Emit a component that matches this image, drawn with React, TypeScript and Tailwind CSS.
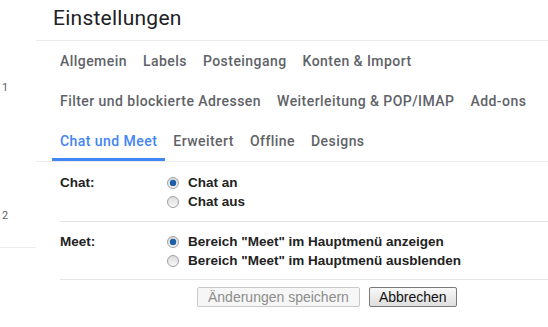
import { ReactNode } from 'react';

const tabCn = 'h-full flex items-center px-2 pt-[1px] text-[14px] tracking-[0.45px] font-medium text-[#5f6368]';
const labelCn = 'text-[13.5px] font-bold text-[#222222] leading-[19px]';

const Radio = ({ checked }: { checked?: boolean }) => {
  return (
    <span className="w-[12px] h-[12px] rounded-full border border-[#a0a0a0] bg-gradient-to-b from-[#dcdcdc] to-[#f7f7f7] flex items-center justify-center shrink-0">
      {checked && <span className="w-[6px] h-[6px] rounded-full bg-[#1a5fa8] shadow-[0_0_1px_#0b3e80]" />}
    </span>
  );
};

const Option = ({ checked, children }: { checked?: boolean; children: ReactNode }) => {
  return (
    <label className="flex items-center gap-[9px]">
      <Radio checked={checked} />
      <span className={labelCn}>{children}</span>
    </label>
  );
};

const App = () => {
  return (
    <div
      className="w-[548px] h-[327px] overflow-hidden bg-white flex"
      style={{ fontFamily: 'Roboto, "Liberation Sans", Arial, sans-serif' }}
    >
      <div className="w-[36px] shrink-0 flex flex-col text-[11px] text-[#5f6368]">
        <div className="pt-[80px] pl-[2px] leading-[16px]">1</div>
        <div className="pt-[112px] pl-[2px] leading-[16px]">2</div>
        <div className="h-[24px] border-b border-[#ececec]" />
      </div>

      <div className="flex-1 flex flex-col">
        <div className="h-[41px] border-b border-[#ebebeb] pl-[17px] pt-[5px]">
          <span className="text-[21px] tracking-[0.25px] leading-[26px] text-[#202124]">Einstellungen</span>
        </div>

        <div className="pl-[16px] flex h-[40px]">
          <div className={tabCn}>Allgemein</div>
          <div className={tabCn}>Labels</div>
          <div className={tabCn}>Posteingang</div>
          <div className={tabCn}>Konten &amp; Import</div>
        </div>
        <div className="pl-[16px] flex h-[40px]">
          <div className={tabCn}>Filter und blockierte Adressen</div>
          <div className={tabCn}>Weiterleitung &amp; POP/IMAP</div>
          <div className={tabCn}>Add-ons</div>
        </div>
        <div className="pl-[16px] flex h-[41px] border-b border-[#ebebeb]">
          <div className="h-full flex items-center px-2 text-[14px] tracking-[0.45px] font-medium text-[#4285f4] border-b-[3px] border-[#4285f4] pt-[3px]">
            Chat und Meet
          </div>
          <div className={tabCn}>Erweitert</div>
          <div className={tabCn}>Offline</div>
          <div className={tabCn}>Designs</div>
        </div>

        <div
          className="pl-[24px] flex flex-col"
          style={{ fontFamily: '"Liberation Sans", Arial, sans-serif' }}
        >
          <div className="flex pt-[11px] pb-[10px] border-b border-[#e5e5e5]">
            <div className={`${labelCn} w-[107px]`}>Chat:</div>
            <div className="flex flex-col">
              <Option checked>Chat an</Option>
              <Option>Chat aus</Option>
            </div>
          </div>
          <div className="flex pt-[10px] pb-[9px] border-b border-[#e5e5e5]">
            <div className={`${labelCn} w-[107px] leading-[18px]`}>Meet:</div>
            <div className="flex flex-col">
              <Option checked>Bereich "Meet" im Hauptmenü anzeigen</Option>
              <Option>Bereich "Meet" im Hauptmenü ausblenden</Option>
            </div>
          </div>
          <div className="flex gap-[9px] pl-[137px] pt-[7px]">
            <button
              disabled
              className="h-[20px] px-[10px] text-[14px] leading-[18px] text-[#8d8d8d] bg-[#f6f6f6] border border-[#c9c9c9] rounded-[2px]"
            >
              Änderungen speichern
            </button>
            <button className="h-[20px] px-[9px] text-[14px] leading-[18px] text-[#111] bg-gradient-to-b from-[#f8f8f8] to-[#dedede] border border-[#7a7a7a] rounded-[2px]">
              Abbrechen
            </button>
          </div>
        </div>
      </div>
    </div>
  );
};

export default App;
